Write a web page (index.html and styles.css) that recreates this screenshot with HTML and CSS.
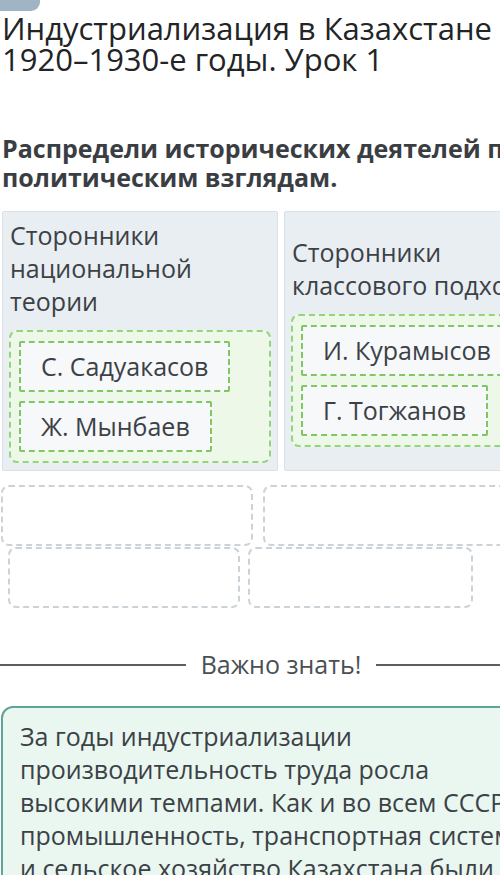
FILE: index.html
```html
<!DOCTYPE html>
<html lang="ru">
<head>
<meta charset="utf-8">
<title>Индустриализация в Казахстане</title>
<link rel="stylesheet" href="styles.css">
</head>
<body>
<div class="page">
  <div class="back-tab"></div>
  <h1 class="lesson-title">Индустриализация в Казахстане <span class="nowrap">1920–1930-е</span> годы. Урок 1</h1>

  <h2 class="task">Распредели исторических деятелей по политическим взглядам.</h2>

  <div class="sort-board">
    <div class="category">
      <div class="category-title">Сторонники национальной теории</div>
      <div class="drop-zone">
        <div class="chip">С. Садуакасов</div>
        <div class="chip">Ж. Мынбаев</div>
      </div>
    </div>
    <div class="category">
      <div class="category-title">Сторонники классового подхода</div>
      <div class="drop-zone">
        <div class="chip">И. Курамысов</div>
        <div class="chip">Г. Тогжанов</div>
      </div>
    </div>
  </div>

  <div class="pool">
    <div class="pool-row">
      <div class="slot slot-wide"></div>
      <div class="slot slot-wide"></div>
    </div>
    <div class="pool-row pool-row-shift">
      <div class="slot slot-mid"></div>
      <div class="slot slot-narrow"></div>
    </div>
  </div>

  <div class="divider">
    <span class="divider-line"></span>
    <span class="divider-text">Важно знать!</span>
    <span class="divider-line"></span>
  </div>

  <div class="note">
    За годы индустриализации производительность труда росла высокими темпами. Как и во всем СССР, промышленность, транспортная система и сельское хозяйство Казахстана были переведены на новые рельсы.
  </div>
</div>
</body>
</html>
```
FILE: styles.css
```css
html, body {
  margin: 0;
  padding: 0;
  background: #ffffff;
  overflow: hidden;
}

.page {
  width: 560px;
  padding-left: 2px;
  font-family: "Open Sans", "Noto Sans", sans-serif;
  color: #3c4146;
}

.nowrap {
  white-space: nowrap;
}

.back-tab {
  width: 40px;
  height: 11px;
  margin-left: -2px;
  background: #9fb4c4;
  border-bottom-right-radius: 9px;
}

.lesson-title {
  margin: 2px 0 0;
  font-size: 31px;
  line-height: 31px;
  font-weight: 400;
  color: #222426;
}

.task {
  margin: 59px 0 0;
  font-size: 25px;
  line-height: 29px;
  font-weight: 700;
  color: #3a3e43;
}

.sort-board {
  margin-top: 19px;
  display: grid;
  grid-template-columns: 276px 276px;
  column-gap: 6px;
}

.category {
  display: flex;
  flex-direction: column;
  justify-content: center;
  padding: 7px 6px;
  background: #e9eef2;
  border: 1px solid #d9e1e7;
  border-radius: 2px;
}

.category-title {
  font-size: 25px;
  line-height: 33px;
  padding-left: 1px;
  color: #3c4146;
}

.drop-zone {
  margin-top: 12px;
  padding: 9px 8px;
  display: flex;
  flex-direction: column;
  align-items: flex-start;
  gap: 9px;
  background: #eef8e9;
  border: 2px dashed #95d47f;
  border-radius: 8px;
}

.chip {
  padding: 7px 20px;
  font-size: 25px;
  line-height: 33px;
  white-space: nowrap;
  background: #f6f8fa;
  border: 2px dashed #7fc765;
  border-radius: 2px;
  color: #3c4146;
}

.pool {
  margin-top: 14px;
  margin-left: -1px;
  display: flex;
  flex-direction: column;
  gap: 1px;
}

.pool-row {
  display: flex;
  gap: 10px;
}

.pool-row-shift {
  margin-left: 7px;
  gap: 8px;
}

.slot {
  height: 61px;
  box-sizing: border-box;
  border: 2px dashed #ccd3d8;
  border-radius: 8px;
  background: #ffffff;
}

.slot-wide { width: 252px; }
.slot-mid { width: 232px; }
.slot-narrow { width: 225px; }

.divider {
  margin-top: 40px;
  margin-left: -2px;
  display: flex;
  align-items: center;
  gap: 15px;
}

.divider-line {
  flex: 1;
  height: 2px;
  background: #5a5f63;
}

.divider-text {
  font-size: 25px;
  line-height: 33px;
  color: #4a4f54;
}

.note {
  margin-top: 25px;
  margin-left: -1px;
  width: 516px;
  padding: 12px 19px 12px 17px;
  font-size: 25px;
  line-height: 33px;
  color: #3c4146;
  background: #e9f7f0;
  border: 2px solid #5da597;
  border-radius: 12px;
}
```
